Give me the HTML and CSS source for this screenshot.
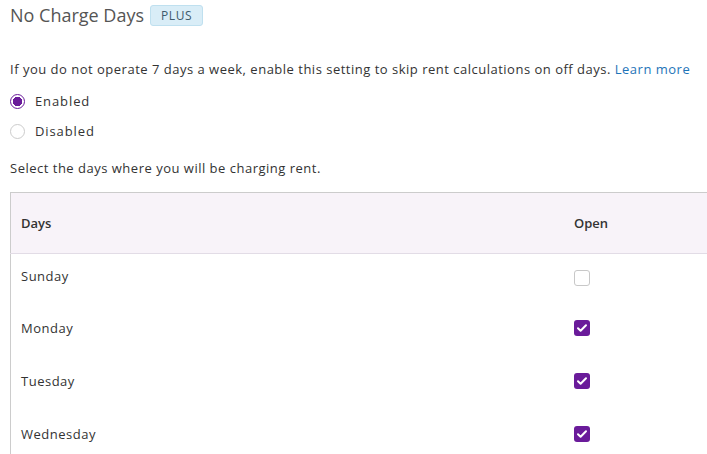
FILE: index.html
```html
<!DOCTYPE html>
<html lang="en">
<head>
  <meta charset="UTF-8"/>
  <title>No Charge Days</title>
  <link rel="stylesheet" href="styles.css">
</head>
<body>

  <div class="page">
    <h2 class="title">No Charge Days <span class="badge">PLUS</span></h2>

    <p class="intro">If you do not operate 7 days a week, enable this setting to skip rent calculations on off days. <a href="#">Learn more</a></p>

    <div class="radios">
      <label class="radio-row"><span class="radio checked"></span>Enabled</label>
      <label class="radio-row"><span class="radio"></span>Disabled</label>
    </div>

    <p class="hint">Select the days where you will be charging rent.</p>

    <table class="days">
      <thead>
        <tr>
          <th>Days</th>
          <th class="open-col">Open</th>
        </tr>
      </thead>
      <tbody>
        <tr class="first">
          <td>Sunday</td>
          <td class="open-col"><span class="check"></span></td>
        </tr>
        <tr>
          <td>Monday</td>
          <td class="open-col"><span class="check on"><svg viewBox="0 0 16 16" width="16" height="16"><path d="M4 8.3l2.6 2.5L12 5.3" fill="none" stroke="#fff" stroke-width="2" stroke-linecap="round" stroke-linejoin="round"/></svg></span></td>
        </tr>
        <tr>
          <td>Tuesday</td>
          <td class="open-col"><span class="check on"><svg viewBox="0 0 16 16" width="16" height="16"><path d="M4 8.3l2.6 2.5L12 5.3" fill="none" stroke="#fff" stroke-width="2" stroke-linecap="round" stroke-linejoin="round"/></svg></span></td>
        </tr>
        <tr>
          <td>Wednesday</td>
          <td class="open-col"><span class="check on"><svg viewBox="0 0 16 16" width="16" height="16"><path d="M4 8.3l2.6 2.5L12 5.3" fill="none" stroke="#fff" stroke-width="2" stroke-linecap="round" stroke-linejoin="round"/></svg></span></td>
        </tr>
      </tbody>
    </table>
  </div>

</body>
</html>
```

FILE: styles.css
```css
body {
  margin: 0;
  background: #fff;
  font-family: "Open Sans", sans-serif;
  color: #333;
  overflow: hidden;
}
.page {
  padding: 0 0 0 10px;
}
.title {
  margin: 0;
  padding-top: 3px;
  font-size: 18px;
  font-weight: 400;
  color: #555;
  display: flex;
  align-items: center;
  line-height: 24px;
}
.badge {
  margin-left: 6px;
  padding: 0 10px;
  height: 19px;
  line-height: 19px;
  font-size: 12px;
  letter-spacing: 0.6px;
  color: #3d5a6c;
  background: #d9edf7;
  border: 1px solid #bfe0ef;
  border-radius: 3px;
}
.intro {
  margin: 33px 0 0;
  font-size: 13px;
  line-height: 18px;
  letter-spacing: 0.5px;
}
.intro a {
  color: #1e74b8;
  text-decoration: none;
}
.radios {
  margin-top: 8px;
}
.radio-row {
  display: flex;
  align-items: center;
  height: 30px;
  font-size: 13px;
  letter-spacing: 0.9px;
}
.radio {
  width: 15px;
  height: 15px;
  box-sizing: border-box;
  border: 1px solid #ccc;
  border-radius: 50%;
  margin-right: 10px;
  background: #fff;
}
.radio.checked {
  border: 1.5px solid #6a1b9a;
  background: radial-gradient(circle, #6a1b9a 0 4.5px, #fff 5px);
}
.hint {
  margin: 13px 0 0;
  font-size: 13px;
  line-height: 18px;
  letter-spacing: 0.5px;
}
.days {
  margin-top: 15px;
  width: 100%;
  border-collapse: collapse;
  border-top: 1px solid #ccc;
  border-left: 1px solid #ccc;
  font-size: 13px;
}
.days th {
  background: #f8f3f9;
  text-align: left;
  font-weight: 600;
  height: 60px;
  padding: 0 10px;
  border-bottom: 1px solid #e2dce6;
  color: #333;
}
.days td {
  height: 53px;
  padding: 0 10px;
  letter-spacing: 0.5px;
}
.days .first td {
  height: 48px;
  vertical-align: top;
  padding-top: 13px;
  box-sizing: border-box;
}
.days .first .check {
  margin-top: 3px;
}
.days .open-col {
  width: 123px;
  padding-left: 0;
}
.check {
  display: block;
  width: 16px;
  height: 16px;
  box-sizing: border-box;
  border: 1px solid #c8c8c8;
  border-radius: 3px;
}
.check.on {
  border: none;
  background: #6a1b9a;
}
.check svg {
  display: block;
}
```
